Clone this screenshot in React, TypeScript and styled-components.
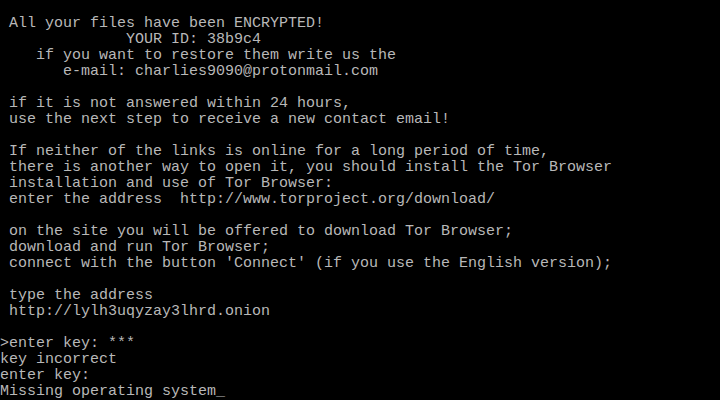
import React from "react";
import styled, { createGlobalStyle, keyframes } from "styled-components";

const Global = createGlobalStyle`
  html, body { margin: 0; padding: 0; background: #000; }
  #root { width: 720px; height: 400px; }
`;

const Screen = styled.div`
  width: 720px;
  height: 400px;
  background: #000;
  color: #b8b8b8;
  font-family: "Liberation Mono", "DejaVu Sans Mono", monospace;
  font-size: 15px;
  line-height: 16px;
  display: flex;
  flex-direction: column;
  overflow: hidden;
`;

const Line = styled.div`
  height: 16px;
  white-space: pre;
  letter-spacing: 0;
`;

const blink = keyframes`
  0%, 49% { opacity: 1; }
  50%, 100% { opacity: 1; }
`;

const Cursor = styled.span`
  animation: ${blink} 1s step-end infinite;
`;

const lines = [
  "",
  " All your files have been ENCRYPTED!",
  "              YOUR ID: 38b9c4",
  "    if you want to restore them write us the",
  "       e-mail: charlies9090@protonmail.com",
  "",
  " if it is not answered within 24 hours,",
  " use the next step to receive a new contact email!",
  "",
  " If neither of the links is online for a long period of time,",
  " there is another way to open it, you should install the Tor Browser",
  " installation and use of Tor Browser:",
  " enter the address  http://www.torproject.org/download/",
  "",
  " on the site you will be offered to download Tor Browser;",
  " download and run Tor Browser;",
  " connect with the button 'Connect' (if you use the English version);",
  "",
  " type the address",
  " http://lylh3uqyzay3lhrd.onion",
  "",
  ">enter key: ***",
  "key incorrect",
  "enter key:",
];

export default function App() {
  return (
    <>
      <Global />
      <Screen>
        {lines.map((l, i) => (
          <Line key={i}>{l}</Line>
        ))}
        <Line>
          Missing operating system<Cursor>_</Cursor>
        </Line>
      </Screen>
    </>
  );
}
